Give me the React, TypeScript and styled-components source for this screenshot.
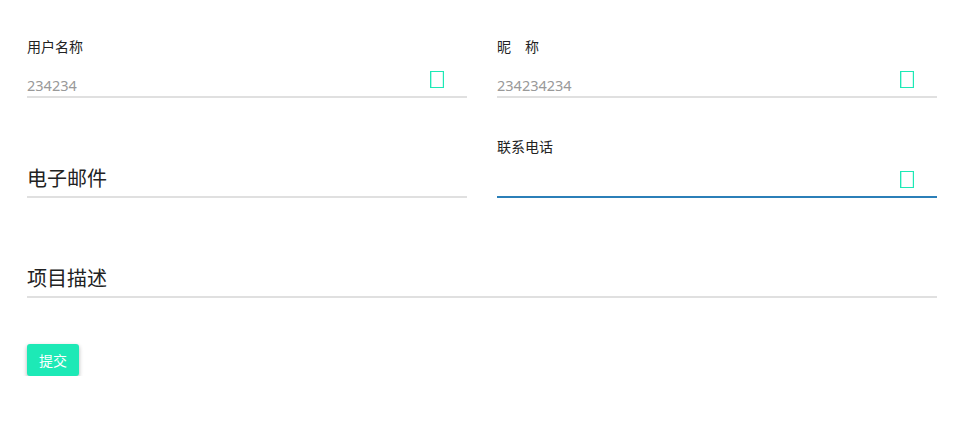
import styled, { createGlobalStyle } from 'styled-components'

const GlobalStyle = createGlobalStyle`
  body {
    margin: 0;
    background: #fff;
    font-family: 'Noto Sans', 'Noto Sans CJK SC', sans-serif;
  }
`

const Form = styled.form`
  padding: 0 22px 0 27px;
`

const Grid = styled.div`
  display: grid;
  grid-template-columns: 1fr 1fr;
  column-gap: 30px;
  row-gap: 2px;
`

const Field = styled.div<{ $wide?: boolean }>`
  grid-column: ${(p) => (p.$wide ? '1 / span 2' : 'auto')};
  height: 98px;
  display: flex;
  flex-direction: column;
  justify-content: flex-end;
`

const Label = styled.label`
  height: 20px;
  line-height: 20px;
  font-size: 14px;
  color: #222;
  font-family: 'Noto Sans CJK SC', sans-serif;
`

const InputRow = styled.div<{ $active?: boolean }>`
  height: 40px;
  display: flex;
  align-items: flex-end;
  justify-content: space-between;
  border-bottom: 2px solid ${(p) => (p.$active ? '#2b7fb8' : '#e0e0e0')};
`

const Value = styled.span`
  font-size: 14.5px;
  line-height: 22px;
  margin-bottom: 0;
  color: #999;
`

const Hint = styled.span`
  font-size: 20px;
  line-height: 26px;
  margin-bottom: 5px;
  color: #222;
  font-family: 'Noto Sans CJK SC', sans-serif;
`

const Tofu = styled.span`
  box-sizing: border-box;
  width: 14px;
  height: 17px;
  margin: 0 23px 8px 0;
  border: 1px solid #1de9b6;
  box-shadow: inset 1px 0 0 rgba(29, 233, 182, 0.35), inset -1px 0 0 rgba(29, 233, 182, 0.2);
`

const Submit = styled.button`
  margin-top: 46px;
  width: 52px;
  height: 32px;
  border: none;
  border-radius: 3px;
  background: #1de9b6;
  color: #fff;
  font-size: 14px;
  font-family: 'Noto Sans CJK SC', sans-serif;
  box-shadow: 0 2px 4px rgba(0, 0, 0, 0.3);
  cursor: pointer;
`

const Spacer = styled.div`
  height: 20px;
`

const App: React.FC = () => {
  return (
    <>
      <GlobalStyle />
      <Form>
        <Grid>
          <Field>
            <Label>用户名称</Label>
            <InputRow>
              <Value>234234</Value>
              <Tofu />
            </InputRow>
          </Field>
          <Field>
            <Label>昵　称</Label>
            <InputRow>
              <Value>234234234</Value>
              <Tofu />
            </InputRow>
          </Field>
          <Field>
            <Spacer />
            <InputRow>
              <Hint>电子邮件</Hint>
            </InputRow>
          </Field>
          <Field>
            <Label>联系电话</Label>
            <InputRow $active>
              <span />
              <Tofu />
            </InputRow>
          </Field>
          <Field $wide>
            <Spacer />
            <InputRow>
              <Hint>项目描述</Hint>
            </InputRow>
          </Field>
        </Grid>
        <Submit type="button">提交</Submit>
      </Form>
    </>
  )
}

export default App
